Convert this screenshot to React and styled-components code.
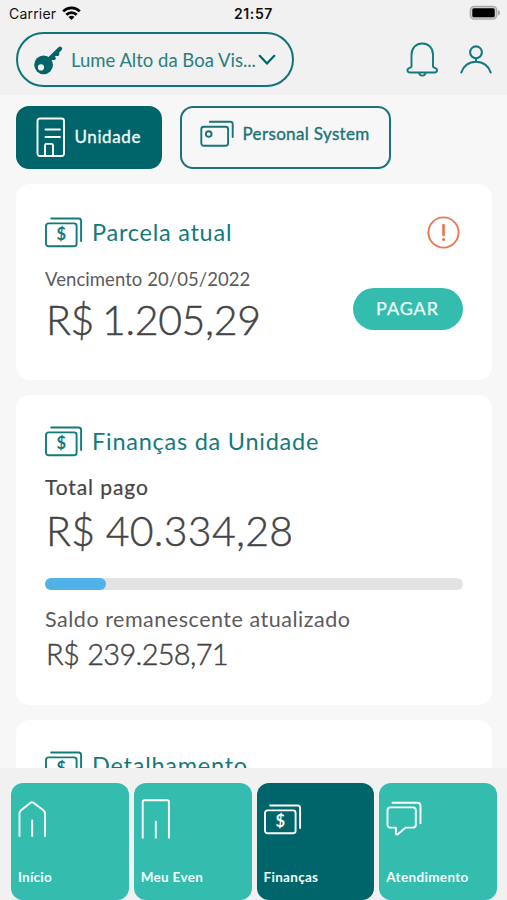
import styled, { createGlobalStyle } from "styled-components"

const TEAL = "#00656a"
const MINT = "#34bdaf"

const KeyIcon = () => (
  <svg width="31" height="31" viewBox="0 0 31 31" fill="none">
    <path d="M12 18.500 26 4.800" stroke={TEAL} strokeWidth="4.400" strokeLinecap="round" />
    <path d="M18 14.500 20.200 14.300M22 10.500l1.800-.2" stroke={TEAL} strokeWidth="3.200" strokeLinecap="round" />
    <circle cx="9.6" cy="20.8" r="9.4" fill={TEAL} />
    <circle cx="7" cy="23.400" r="3.100" fill="#f1f1f1" />
  </svg>
)

const Chevron = () => (
  <svg width="18" height="12" viewBox="0 0 18 12" fill="none" stroke={TEAL} strokeWidth="2.2" strokeLinecap="round" strokeLinejoin="round">
    <path d="M1.7 1.8 9 9.6l7.3-7.8" />
  </svg>
)

const BellIcon = () => (
  <svg width="34" height="36" viewBox="0 0 34 36" fill="none" stroke="#137a7b" strokeWidth="1.9" strokeLinecap="round" strokeLinejoin="round">
    <path d="M6.500 24.600V12.500C6.500 6 11 1.500 17.300 1.500S28 6 28 12.500v12.100c0 .8.6 1 1.600 1.200 3.400.8 3.200 4.700-.4 4.700H5.300C1.700 30.500 1.500 26.600 4.900 25.800 5.900 25.600 6.500 25.400 6.500 24.600Z" />
    <path d="M14.100 31c.3 3.500 6.100 3.500 6.400 0" />
  </svg>
)

const UserIcon = () => (
  <svg width="34" height="30" viewBox="0 0 34 30" fill="none" stroke="#137a7b" strokeWidth="2.100" strokeLinecap="round">
    <circle cx="17" cy="7.300" r="5.900" />
    <path d="M17 13.500v3M2.300 27.500C4.300 21 10 16.700 17 16.700S29.700 21 31.700 27.500" />
  </svg>
)

const WifiIcon = () => (
  <svg width="19" height="15" viewBox="0 0 19 15" fill="none" stroke="#000" strokeWidth="2.700">
    <path d="M1.200 5.400C5.900.8 13.100.8 17.800 5.400" />
    <path d="M4.300 8.700c3-2.900 7.400-2.900 10.400 0" />
    <path d="M9.500 14 6.500 11c1.700-1.600 4.300-1.600 6 0Z" fill="#000" stroke="none" />
  </svg>
)

const BatteryIcon = () => (
  <svg width="32" height="16" viewBox="0 0 32 16">
    <rect x="1.300" y="1.300" width="26.500" height="12.800" rx="4" fill="#ccc" stroke="#aaa" strokeWidth="1.300" />
    <rect x="3.300" y="3.200" width="22.400" height="9" rx="1.500" fill="#000" />
    <path d="M29 5v5.500c2.700-.8 2.700-4.700 0-5.500Z" fill="#aaa" />
  </svg>
)

const BuildingIcon = () => (
  <svg width="30" height="41" viewBox="0 0 30 41" fill="none" stroke="#fff" strokeWidth="1.900" strokeLinecap="round" strokeLinejoin="round">
    <rect x="1.500" y="1.500" width="26.500" height="37.500" rx="2.500" />
    <path d="M9.500 12.500H24M9.500 20H24M9 38.500V28.500c0-1 .6-1.600 1.500-1.600h5c.9 0 1.500.6 1.500 1.600v10" />
  </svg>
)

const CardsIcon = () => (
  <svg width="34" height="28" viewBox="0 0 34 28" fill="none" stroke="#1b7377" strokeWidth="1.900" strokeLinecap="round">
    <rect x="1.300" y="6.800" width="26.800" height="19" rx="2.500" />
    <path d="M9.800 1.700h20.400c1.600 0 2.500.8 2.500 2.400v13" />
    <circle cx="8.700" cy="14" r="2.800" />
  </svg>
)

const MoneyIcon = ({ color = "#137a7b" }) => (
  <svg width="38" height="31" viewBox="0 0 38 31" fill="none" stroke={color} strokeWidth="1.900" strokeLinecap="round">
    <rect x="1" y="6.400" width="30.600" height="22.800" rx="2.500" />
    <path d="M6.200 1.500h27.500c1.700 0 2.400.9 2.400 2.600v20" />
    <DollarSign x="16.200" y="23.400" textAnchor="middle" fill={color} stroke="none">$</DollarSign>
  </svg>
)

const AlertIcon = () => (
  <svg width="33" height="33" viewBox="0 0 33 33" fill="none" stroke="#e87950" strokeLinecap="round">
    <circle cx="16.500" cy="16.500" r="15.100" strokeWidth="1.900" />
    <path d="M16.500 9.200v9.800" strokeWidth="2.700" />
    <circle cx="16.500" cy="23.600" r="1.600" fill="#e87950" stroke="none" />
  </svg>
)

const navIcon = {
  fill: "none",
  stroke: "#fff",
  strokeWidth: 1.9,
  strokeLinecap: "round",
  strokeLinejoin: "round",
}

const HomeIcon = () => (
  <svg width="38" height="42" viewBox="0 0 38 42" {...navIcon}>
    <path d="M1.500 37V14.500c0-1.500.5-2.300 1.600-3.200L12.500 3.800c1-.8 2-.8 3 0l9.900 7.500c1.100.9 1.600 1.700 1.600 3.200V37M14.200 21.500V37" />
  </svg>
)

const DoorIcon = () => (
  <svg width="38" height="42" viewBox="0 0 38 42" {...navIcon}>
    <path d="M1.700 38.800V3c0-1.200.6-1.700 1.700-1.700h22.800c1.100 0 1.700.5 1.700 1.700v35.800M14.800 22.800v16" />
  </svg>
)

const ChatIcon = () => (
  <svg width="38" height="42" viewBox="0 0 38 42" {...navIcon}>
    <path d="M4.300 8.400h22.500c1.900 0 3 1 3 2.900v14.400c0 1.900-1.100 2.900-3 2.900H19.800l-8 6.600c-.9.700-1.900.3-1.900-.8v-5.800H4.300c-1.900 0-2.800-1-2.800-2.900V11.300c0-1.900.9-2.900 2.800-2.900Z" />
    <path d="M6.500 3.700h24.800c2 0 3.200 1.100 3.200 3v17.500" />
  </svg>
)

const navItems = [
  { label: "Início", icon: <HomeIcon />, spacing: "0.2px" },
  { label: "Meu Even", icon: <DoorIcon />, spacing: "0.3px" },
  { label: "Finanças", icon: <MoneyIcon color="#fff" />, active: true, spacing: "0.3px" },
  { label: "Atendimento", icon: <ChatIcon />, spacing: "0.35px" },
]

export default function App() {
  return <>
    <GlobalStyle />
    <Screen>
      <Header>
        <StatusBar>
          <Carrier>Carrier <WifiIcon /></Carrier>
          <Clock>21:57</Clock>
          <BatteryIcon />
        </StatusBar>
        <Toolbar>
          <UnitPicker>
            <KeyIcon />
            <Text $size={18.5} $line={24} $color="#28807f" $spacing="0">Lume Alto da Boa Vis...</Text>
            <Chevron />
          </UnitPicker>
          <Actions>
            <BellIcon />
            <UserIcon />
          </Actions>
        </Toolbar>
      </Header>

      <Content>
        <Tabs>
          <Tab $active>
            <BuildingIcon />
            <Text $size={17} $line={22} $stroke={0.35} $color="#eefafa" $spacing="0.6px">Unidade</Text>
          </Tab>
          <Tab>
            <CardsIcon />
            <Text $size={17} $line={22} $stroke={0.35} $color="#1b7377" $spacing="0.35px">Personal System</Text>
          </Tab>
        </Tabs>

        <Card $height={196} $top={32}>
          <CardHeader>
            <CardTitle><MoneyIcon /><span>Parcela atual</span></CardTitle>
            <AlertIcon />
          </CardHeader>
          <Installment>
            <div>
              <Text $size={18.5} $line={22} $color="#5b5b5b" $spacing="0.06px">Vencimento 20/05/2022</Text>
              <Amount $size={41} $line={48} $top={6} $spacing="-0.3px" $gap={-3}>R$ 1.205,29</Amount>
            </div>
            <PayButton>PAGAR</PayButton>
          </Installment>
        </Card>

        <Card $height={310} $top={31}>
          <CardTitle><MoneyIcon /><span>Finanças da Unidade</span></CardTitle>
          <Text $size={21} $line={26} $top={17} $stroke={0.2} $spacing="0.9px">Total pago</Text>
          <Amount $size={41} $line={48} $top={7} $spacing="0.3px" $gap={-1}>R$ 40.334,28</Amount>
          <Progress>
            <ProgressFill style={{ width: "14.5%" }} />
          </Progress>
          <Text $size={21.5} $line={26} $top={16} $color="#5b5b5b" $spacing="0.52px">Saldo remanescente atualizado</Text>
          <Amount $size={29} $line={36} $top={4} $spacing="-0.7px" $gap={1}>R$ 239.258,71</Amount>
        </Card>

        <Card $height={196} $top={30.5}>
          <CardTitle><MoneyIcon /><span>Detalhamento</span></CardTitle>
        </Card>
      </Content>

      <BottomNav>
        {navItems.map((item) => (
          <NavItem key={item.label} $active={item.active}>
            <NavIcon>{item.icon}</NavIcon>
            <NavLabel $spacing={item.spacing}>{item.label}</NavLabel>
          </NavItem>
        ))}
      </BottomNav>
    </Screen>
  </>
}

const GlobalStyle = createGlobalStyle`
  *{
    box-sizing:border-box;
  }
  body{
    margin:0;
    font-family: Lato, "Liberation Sans", sans-serif;
  }
  svg{
    display:block;
    flex-shrink:0;
  }
`;

const Screen = styled.div`
  display:flex;
  flex-direction:column;
  width:507px;
  height:900px;
  overflow:hidden;
  background:#f7f7f7;
`;

const Header = styled.header`
  height:95px;
  flex-shrink:0;
  background:#f1f1f1;
`;

const StatusBar = styled.div`
  display:grid;
  grid-template-columns: 1fr auto 1fr;
  align-items:center;
  height:28px;
  padding:0 6px 0 9px;
  font-family: Inter, sans-serif;
  font-size:14px;
  color:#111;

  > svg{
    justify-self:end;
    margin-top:-2px;
  }
`;

const Carrier = styled.div`
  display:flex;
  align-items:center;
  gap:6px;
  margin-top:-1px;
  letter-spacing:0.2px;

  svg{
    margin:-1px 0 0;
  }
`;

const Clock = styled.div`
  margin:-1px 3px 0 0;
  font-weight:600;
  letter-spacing:0.6px;
`;

const Toolbar = styled.div`
  display:flex;
  align-items:center;
  justify-content:space-between;
  padding:4px 14px 0 15.5px;
`;

const UnitPicker = styled.button`
  display:flex;
  align-items:center;
  width:278.5px;
  height:55px;
  padding:0 16px;
  border:2.5px solid #0f7476;
  border-radius:28px;
  background:transparent;
  font-family:inherit;

  > div{
    width:187px;
    margin-left:6.5px;
    text-align:left;
  }
`;

const Actions = styled.div`
  display:flex;
  align-items:center;
  gap:20px;
`;

const Text = styled.div`
  margin-top:${({ $top = 0 }) => $top}px;
  font-size:${({ $size }) => $size}px;
  line-height:${({ $line }) => $line}px;
  color:${({ $color = "#444" }) => $color};
  letter-spacing:${({ $spacing = "0" }) => $spacing};
  -webkit-text-stroke:${({ $stroke = 0 }) => $stroke}px currentColor;
  white-space:nowrap;
`;

const Amount = styled(Text)`
  padding-left:1px;
  font-weight:300;
  word-spacing:${({ $gap }) => $gap}px;
  -webkit-text-stroke:0.45px currentColor;
`;

const Content = styled.main`
  flex:1;
  min-height:0;
  overflow:hidden;
  padding:10.5px 15px 0 15.5px;
`;

const Tabs = styled.div`
  display:flex;
  gap:18px;
  margin-bottom:15px;
`;

const Tab = styled.div`
  display:flex;
  align-items:center;
  gap:9px;
  width:${({ $active }) => ($active ? 146 : 211)}px;
  height:63.5px;
  padding:${({ $active }) => ($active ? "0 0 0 18px" : "0 0 6px 18px")};
  border:2.5px solid ${({ $active }) => ($active ? TEAL : "#1b7377")};
  border-radius:13px;
  background:${({ $active }) => ($active ? TEAL : "transparent")};
`;

const Card = styled.section`
  height:${({ $height }) => $height}px;
  margin-bottom:15px;
  padding:${({ $top }) => $top}px 29.5px 0;
  border-radius:14px;
  background:#fff;
`;

const CardHeader = styled.div`
  display:flex;
  align-items:center;
  justify-content:space-between;
  padding-right:3px;
`;

const CardTitle = styled.h2`
  display:flex;
  align-items:center;
  gap:9px;
  height:31px;
  margin:0;
  font-size:23.5px;
  line-height:28px;
  font-weight:400;
  letter-spacing:0.75px;
  color:#137a7b;

  span{
    padding-bottom:2px;
  }
`;

const DollarSign = styled.text`
  font-family: Lato, sans-serif;
  font-size:16.5px;
  font-weight:700;
  letter-spacing:0;
`;

const Installment = styled.div`
  display:flex;
  justify-content:space-between;
  align-items:flex-start;
  margin-top:19px;
`;

const PayButton = styled.button`
  width:110px;
  height:42.5px;
  margin-top:19.5px;
  padding:0 0 2px;
  border:none;
  border-radius:22px;
  background:${MINT};
  color:#effffb;
  font-family:inherit;
  font-size:18px;
  letter-spacing:0.9px;
  -webkit-text-stroke:0.25px currentColor;
`;

const Progress = styled.div`
  height:12px;
  margin-top:22.5px;
  border-radius:6px;
  background:#e3e3e3;
`;

const ProgressFill = styled.div`
  height:100%;
  border-radius:6px;
  background:#51b2e7;
`;

const BottomNav = styled.nav`
  display:grid;
  grid-template-columns: repeat(4, 1fr);
  gap:5px;
  height:132px;
  flex-shrink:0;
  padding:14.5px 10px 0 11px;
  background:#f1f1f1;
`;

const NavItem = styled.div`
  display:flex;
  flex-direction:column;
  justify-content:space-between;
  padding:16px 0 14.5px 7px;
  border-radius:12px;
  background:${({ $active }) => ($active ? TEAL : MINT)};
`;

const NavIcon = styled.div`
  display:flex;
  align-items:center;
  height:42px;
`;

const NavLabel = styled.span`
  color:#f2fffd;
  font-size:13.5px;
  line-height:18px;
  font-weight:700;
  letter-spacing:${({ $spacing }) => $spacing};
`;
